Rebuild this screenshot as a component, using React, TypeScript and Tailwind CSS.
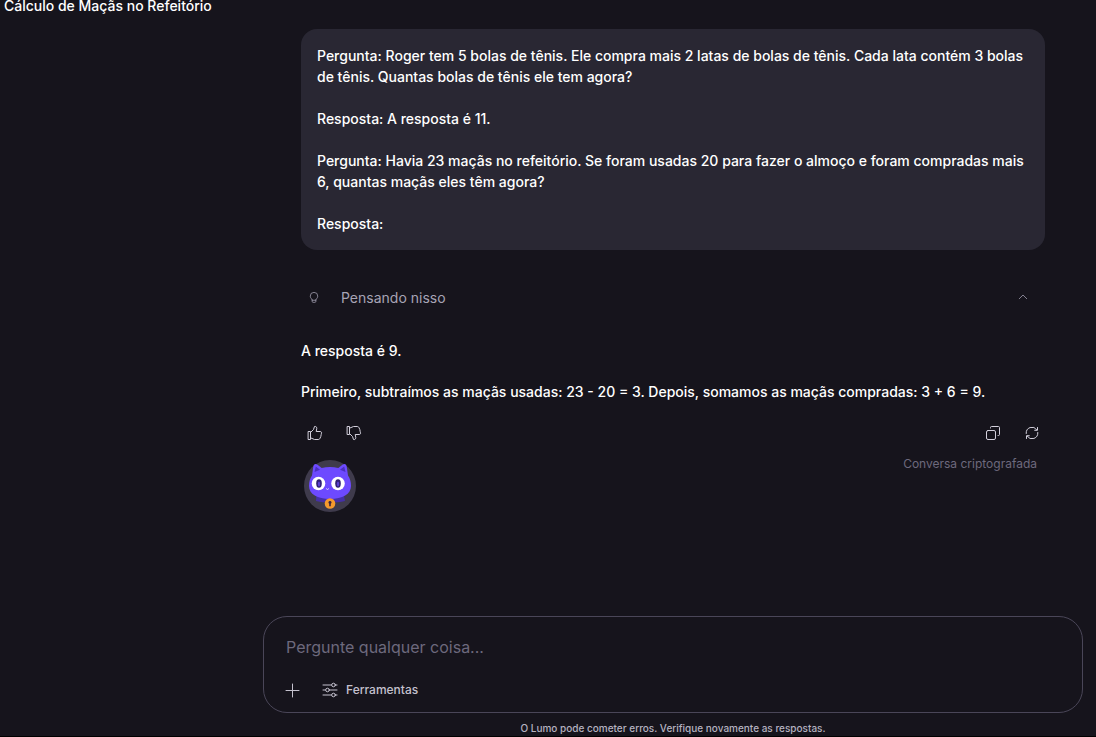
import { useState } from "react";
import type { ReactNode } from "react";

// ---------------------------------------------------------------------------
// 1. Data
// ---------------------------------------------------------------------------

const question = [
  "Pergunta: Roger tem 5 bolas de tênis. Ele compra mais 2 latas de bolas de tênis. Cada lata contém 3 bolas de tênis. Quantas bolas de tênis ele tem agora?",
  "Resposta: A resposta é 11.",
  "Pergunta: Havia 23 maçãs no refeitório. Se foram usadas 20 para fazer o almoço e foram compradas mais 6, quantas maçãs eles têm agora?",
  "Resposta:",
];

const answer = [
  "A resposta é 9.",
  "Primeiro, subtraímos as maçãs usadas: 23 - 20 = 3. Depois, somamos as maçãs compradas: 3 + 6 = 9.",
];

// ---------------------------------------------------------------------------
// 2. Icons
// ---------------------------------------------------------------------------

function Icon({ children, className = "size-4" }: { children: ReactNode; className?: string }) {
  return (
    <svg
      viewBox="0 0 16 16"
      fill="none"
      stroke="currentColor"
      strokeLinecap="round"
      strokeLinejoin="round"
      className={`shrink-0 ${className}`}
      aria-hidden="true"
    >
      {children}
    </svg>
  );
}

const thumb =
  "M1.500 6.500h2v8h-2zM3.500 7.500 6.500 4.500 7.500 1.500h1.200c.8.300 1.100 1 1.100 1.800L9.200 6.500h3.800c1.300 0 1.800.8 1.500 1.700l-.3 1.300-.4 2-.8 1.800c-.3.700-.8 1.200-1.700 1.200H7.500L3.500 12.800";

function CatAvatar() {
  return (
    <svg viewBox="0 0 52 52" className="size-[52px]" role="img" aria-label="Lumo">
      <circle cx="26" cy="26" r="26" fill="#3f3b4c" />
      <path d="M12.500 33h27l1.500 8c-9 2-20 2-29 0z" fill="#4530a8" />
      <path
        d="M8 15.500 9.300 6.500C9.600 4 11.400 3.300 13.200 4.600l4.500 3.400c5.300-1.300 11.300-1.300 16.600 0l4.500-3.400c1.800-1.300 3.600-.6 3.900 1.900l1.300 9C46 18.500 47 21.800 47 26c0 8-8.500 13-21 13S5 34 5 26c0-4.200 1-7.500 3-10.500z"
        fill="#6d4aff"
      />
      <path d="M10.500 12 11.800 6.500l4.200 3.200zM41.500 12l-1.300-5.500L36 9.700z" fill="#4a2fc0" />
      <circle cx="14.500" cy="23.500" r="6.800" fill="#fff" />
      <circle cx="34" cy="23.500" r="6.800" fill="#fff" />
      <ellipse cx="15" cy="23.500" rx="2.800" ry="4.200" fill="#2f2175" />
      <ellipse cx="34" cy="23.500" rx="2.800" ry="4.200" fill="#2f2175" />
      <ellipse cx="15" cy="24" rx="1.200" ry="2.600" fill="#5a3fd0" />
      <ellipse cx="34" cy="24" rx="1.200" ry="2.600" fill="#5a3fd0" />
      <path d="m22.500 28.800 1 .7 1-.7" fill="none" stroke="#e4dcff" strokeLinecap="round" />
      <circle cx="26" cy="43.500" r="5.300" fill="#f59a2c" />
      <path d="M26 41a1.500 1.500 0 0 1 .8 2.800v2.500h-1.600v-2.500A1.500 1.500 0 0 1 26 41z" fill="#3b2440" />
    </svg>
  );
}

function IconButton({ label, children }: { label: string; children: ReactNode }) {
  return (
    <button
      type="button"
      aria-label={label}
      className="flex h-8 w-[27px] items-center justify-center text-[#d3d0dc] hover:text-white"
    >
      {children}
    </button>
  );
}

// ---------------------------------------------------------------------------
// 3. Page
// ---------------------------------------------------------------------------

export default function App() {
  const [open, setOpen] = useState(true);
  const [prompt, setPrompt] = useState("");

  return (
    <div className="flex min-h-screen flex-col border-b border-black bg-[#16141c] font-['Inter',sans-serif] text-sm font-medium text-white">
      <header className="px-1">
        <h1 className="text-sm leading-3 font-medium">Cálculo de Maçãs no Refeitório</h1>
      </header>

      <div className="flex flex-1">
        <aside className="w-[250px] shrink-0" />

        <main className="flex min-w-0 flex-1 flex-col px-3 pt-4">
          <div className="mx-auto w-full max-w-[744px] flex-1">
            {/* User message */}
            <div className="mt-px flex flex-col gap-[21px] rounded-2xl bg-[#292733] p-4 leading-[21px]">
              {question.map((text) => (
                <p key={text}>{text}</p>
              ))}
            </div>

            {/* Reasoning toggle */}
            <button
              type="button"
              aria-expanded={open}
              onClick={() => setOpen(!open)}
              className="mt-6 flex h-12 w-full items-center pr-4 pl-[7px] text-left font-normal text-[#a7a4b5]"
            >
              <Icon className="size-3">
                <path d="M5.500 10.500c0-1.500-2.500-2.200-2.500-5a5 5 0 0 1 10 0c0 2.800-2.500 3.500-2.500 5zM5.500 10.500v2c0 .8.500 1.300 1.300 1.300h2.400c.8 0 1.300-.5 1.300-1.300v-2" />
              </Icon>
              <span className="ml-[21px] flex-1">Pensando nisso</span>
              <Icon className="size-3">
                <path d="m3 9 5-5 5 5" />
              </Icon>
            </button>

            {/* Answer */}
            <div className="mt-[18px] flex flex-col gap-5 leading-[21px]">
              {answer.map((text) => (
                <p key={text}>{text}</p>
              ))}
            </div>

            <div className="mt-[15px] flex justify-between">
              <div className="flex gap-3">
                <IconButton label="Gostei">
                  <Icon>
                    <path d={thumb} />
                  </Icon>
                </IconButton>
                <IconButton label="Não gostei">
                  <Icon className="size-4 -scale-y-100">
                    <path d={thumb} />
                  </Icon>
                </IconButton>
              </div>
              <div className="flex gap-3">
                <IconButton label="Copiar">
                  <Icon>
                    <rect x="1.500" y="5.500" width="9" height="9" rx="1.500" />
                    <path d="M5.500 3V2.500c0-.6.400-1 1-1h7c.6 0 1 .4 1 1v7c0 .6-.4 1-1 1H13" />
                  </Icon>
                </IconButton>
                <IconButton label="Gerar novamente">
                  <Icon>
                    <path d="M2.200 8.500A5.800 5.800 0 0 1 12.800 4.800M13.800 7.500A5.800 5.800 0 0 1 3.200 11.200M13.500 2.500v2.800h-2.800M2.500 13.500v-2.800h2.800" />
                  </Icon>
                </IconButton>
              </div>
            </div>

            <div className="flex items-start justify-between pt-1 pr-2 pl-[3px]">
              <div className="pt-[7px]">
                <CatAvatar />
              </div>
              <span className="text-xs leading-[22px] font-normal text-[#6d697d]">Conversa criptografada</span>
            </div>
          </div>

          {/* Composer */}
          <form
            onSubmit={(e) => e.preventDefault()}
            className="mx-auto w-full max-w-[820px] rounded-3xl border border-[#4a4658] px-5 pt-[18px] pb-2"
          >
            <input
              type="text"
              aria-label="Pergunte qualquer coisa"
              placeholder="Pergunte qualquer coisa..."
              value={prompt}
              onChange={(e) => setPrompt(e.target.value)}
              className="block h-6 w-full bg-transparent px-0.5 text-base font-normal outline-none placeholder:text-[#6d697d]"
            />
            <div className="mt-4 flex h-[29px] items-center gap-[22px] text-[#c4c1ce]">
              <button type="button" aria-label="Adicionar">
                <Icon>
                  <path d="M2 8.500h13M8.500 2v13" />
                </Icon>
              </button>
              <button type="button" className="flex items-center gap-2 text-xs">
                <Icon>
                  <path d="M1 3h8.500M13.500 3H15M1 8h2.500M7.500 8H15M1 13h8.500M13.500 13H15" />
                  <circle cx="11.500" cy="3" r="1.800" />
                  <circle cx="5.500" cy="8" r="1.800" />
                  <circle cx="11.500" cy="13" r="1.800" />
                </Icon>
                Ferramentas
              </button>
            </div>
          </form>

          <p className="pt-2 text-center text-[10px] leading-[15px] text-[#b5b2c0]">
            O Lumo pode cometer erros. Verifique novamente as respostas.
          </p>
        </main>
      </div>
    </div>
  );
}
